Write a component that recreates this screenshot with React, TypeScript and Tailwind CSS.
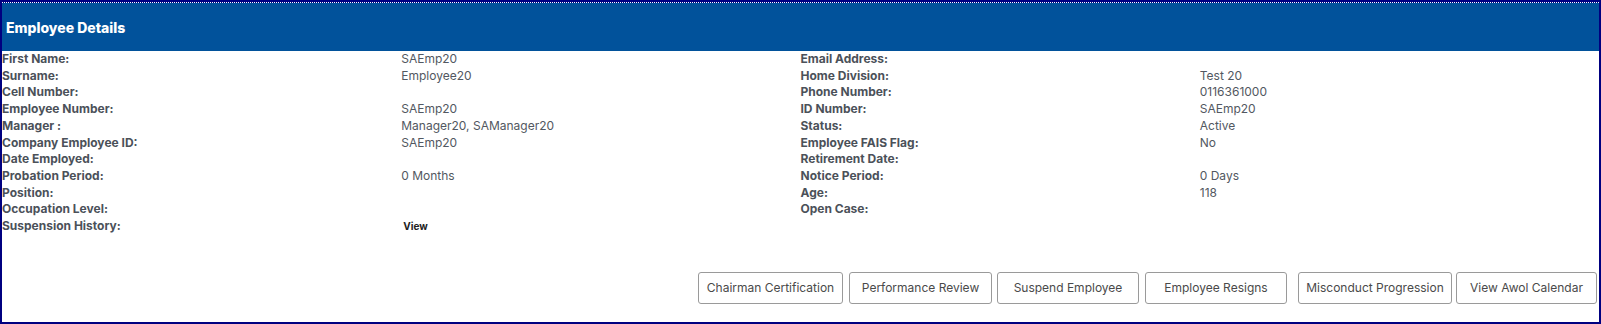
import React from 'react';

const leftRows: [string, string][] = [
  ['First Name:', 'SAEmp20'],
  ['Surname:', 'Employee20'],
  ['Cell Number:', ''],
  ['Employee Number:', 'SAEmp20'],
  ['Manager :', 'Manager20, SAManager20'],
  ['Company Employee ID:', 'SAEmp20'],
  ['Date Employed:', ''],
  ['Probation Period:', '0 Months'],
  ['Position:', ''],
  ['Occupation Level:', ''],
];

const rightRows: [string, string][] = [
  ['Email Address:', ''],
  ['Home Division:', 'Test 20'],
  ['Phone Number:', '0116361000'],
  ['ID Number:', 'SAEmp20'],
  ['Status:', 'Active'],
  ['Employee FAIS Flag:', 'No'],
  ['Retirement Date:', ''],
  ['Notice Period:', '0 Days'],
  ['Age:', '118'],
  ['Open Case:', ''],
];

const buttons = [
  { label: 'Chairman Certification', cls: 'w-[145px]' },
  { label: 'Performance Review', cls: 'w-[143px] ml-[6px]' },
  { label: 'Suspend Employee', cls: 'w-[142px] ml-[5px]' },
  { label: 'Employee Resigns', cls: 'w-[142px] ml-[6px]' },
  { label: 'Misconduct Progression', cls: 'w-[154px] ml-[11px]' },
  { label: 'View Awol Calendar', cls: 'w-[141px] ml-[4px]' },
];

const App = () => {
  return (
    <div className="w-[1601px] h-[324px] bg-white border-x-2 border-b-2 border-t-2 border-[#000080] flex flex-col font-['Inter',sans-serif]">
      {/* focus outline */}
      <div className="h-px bg-[#000080] border-t border-dotted border-white"></div>

      {/* Header */}
      <div className="h-[48px] bg-[#01529b] flex items-center px-[4px]">
        <h2 className="text-white text-[14px] font-extrabold">Employee Details</h2>
      </div>

      {/* Details */}
      <div className="grid grid-cols-4 text-[12px] leading-[16.7px]">
        {leftRows.map(([l, v], i) => (
          <React.Fragment key={i}>
            <div className="font-bold text-[#4b5159]">{l}</div>
            <div className="text-[#525861]">{v}</div>
            <div className="font-bold text-[#4b5159]">{rightRows[i][0]}</div>
            <div className="text-[#525861]">{rightRows[i][1]}</div>
          </React.Fragment>
        ))}
        <div className="font-bold text-[#4b5159]">Suspension History:</div>
        <div className="pl-[2px]">
          <span className="text-[10px] font-bold text-[#222]">View</span>
        </div>
      </div>

      {/* Actions */}
      <div className="mt-auto mb-[18px] flex justify-end pr-[2px]">
        {buttons.map((b) => (
          <button
            key={b.label}
            className={`${b.cls} h-[32px] border border-[#9a9a9a] rounded-[3px] bg-white text-[12px] text-[#4a4a4a]`}
          >
            {b.label}
          </button>
        ))}
      </div>
    </div>
  );
};

export default App;
